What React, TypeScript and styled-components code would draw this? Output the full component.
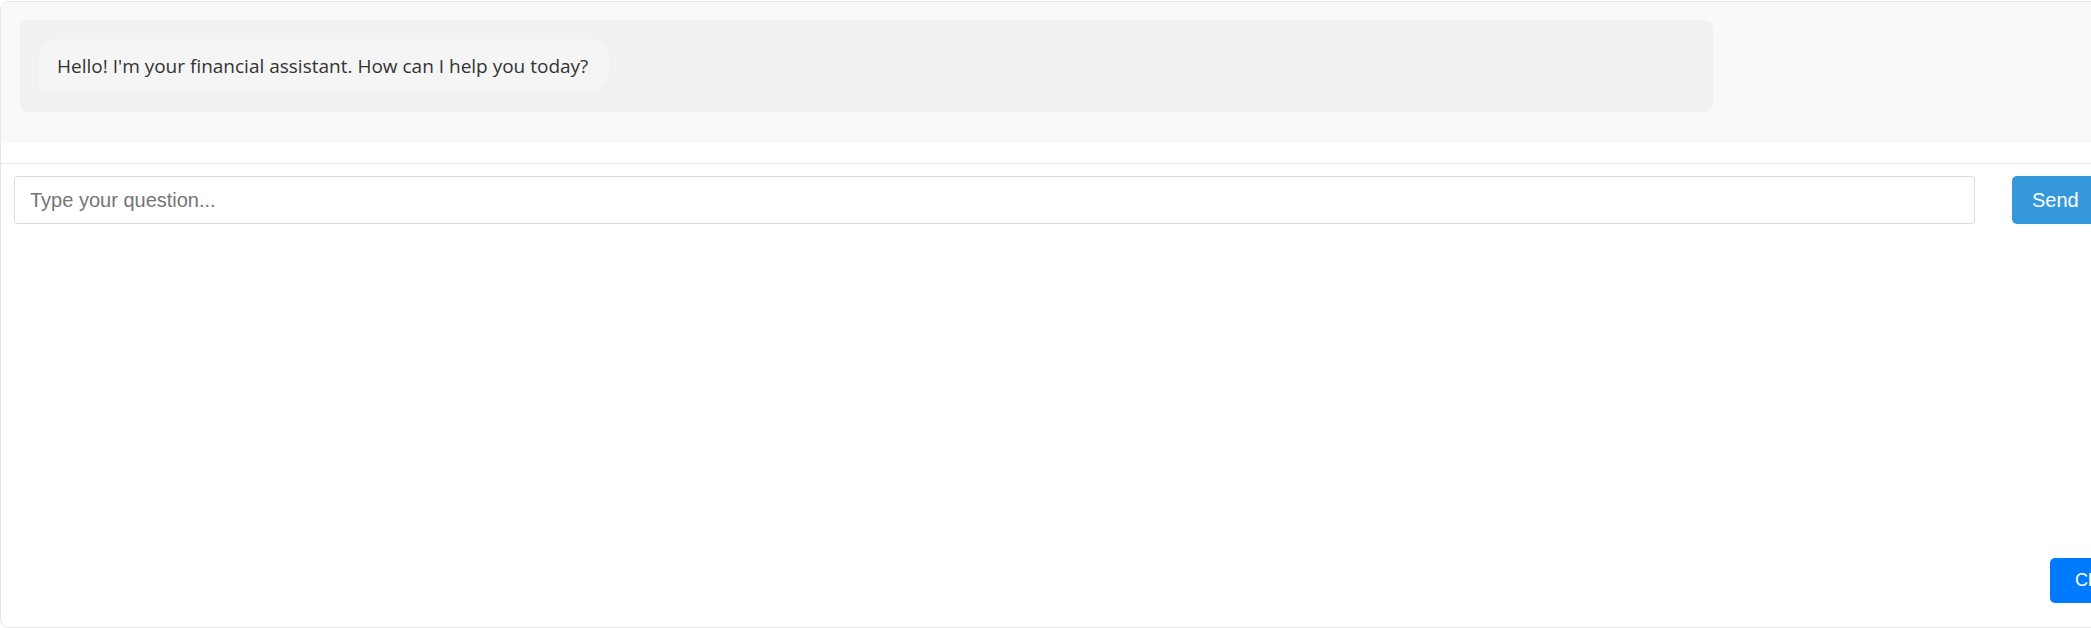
import React from "react";
import styled, { createGlobalStyle } from "styled-components";

const GlobalStyle = createGlobalStyle`
  html, body {
    margin: 0;
    padding: 0;
    overflow: hidden;
    background: #ffffff;
    font-family: "Liberation Sans", Arial, sans-serif;
  }
  * { box-sizing: border-box; }
`;

const Widget = styled.div`
  position: relative;
  width: 2160px;
  height: 627px;
  margin-top: 1px;
  border: 1px solid #e6e6e6;
  border-radius: 8px;
  background: #ffffff;
  display: flex;
  flex-direction: column;
`;

const Messages = styled.div`
  background: #f9f9f9;
  padding: 18px 19px 31px 19px;
  border-radius: 8px 8px 0 0;
  margin-bottom: 20px;
`;

const MessageList = styled.div`
  width: 1693px;
  background: #f1f1f1;
  border-radius: 8px;
  padding: 19px;
`;

const Bubble = styled.div<{ $from: "bot" | "user" }>`
  display: inline-block;
  background: ${(p) => (p.$from === "bot" ? "#f5f5f5" : "#3498db")};
  color: ${(p) => (p.$from === "bot" ? "#333333" : "#ffffff")};
  border-radius: 20px 20px 20px 0;
  padding: 15px 21px 15px 18px;
  font-family: "Open Sans", "Noto Sans", sans-serif;
  font-size: 19px;
  line-height: 24px;
`;

const InputArea = styled.div`
  border-top: 1px solid #e8e8e8;
  padding: 12px 13px;
  display: flex;
  align-items: center;
`;

const QuestionInput = styled.input`
  width: 1961px;
  height: 48px;
  border: 1px solid #dddddd;
  border-radius: 4px;
  padding: 0 15px;
  font-family: "Liberation Sans", Arial, sans-serif;
  font-size: 20px;
  color: #333;
  outline: none;
  &::placeholder { color: #757575; }
`;

const SendButton = styled.button`
  margin-left: 37px;
  height: 48px;
  padding: 0 20px;
  border: none;
  border-radius: 5px;
  background: #3498db;
  color: #ffffff;
  font-family: "Liberation Sans", Arial, sans-serif;
  font-size: 20px;
  cursor: pointer;
  flex-shrink: 0;
`;

const FloatingButton = styled.button`
  position: absolute;
  left: 2049px;
  bottom: 24px;
  height: 45px;
  padding: 0 25px;
  border: none;
  border-radius: 5px;
  background: #007bff;
  color: #ffffff;
  font-family: "Liberation Sans", Arial, sans-serif;
  font-size: 18px;
  cursor: pointer;
`;

export default function App() {
  return (
    <>
      <GlobalStyle />
      <Widget>
        <Messages>
          <MessageList>
            <Bubble $from="bot">
              Hello! I'm your financial assistant. How can I help you today?
            </Bubble>
          </MessageList>
        </Messages>
        <InputArea>
          <QuestionInput placeholder="Type your question..." />
          <SendButton>Send</SendButton>
        </InputArea>
        <FloatingButton>Chat</FloatingButton>
      </Widget>
    </>
  );
}
